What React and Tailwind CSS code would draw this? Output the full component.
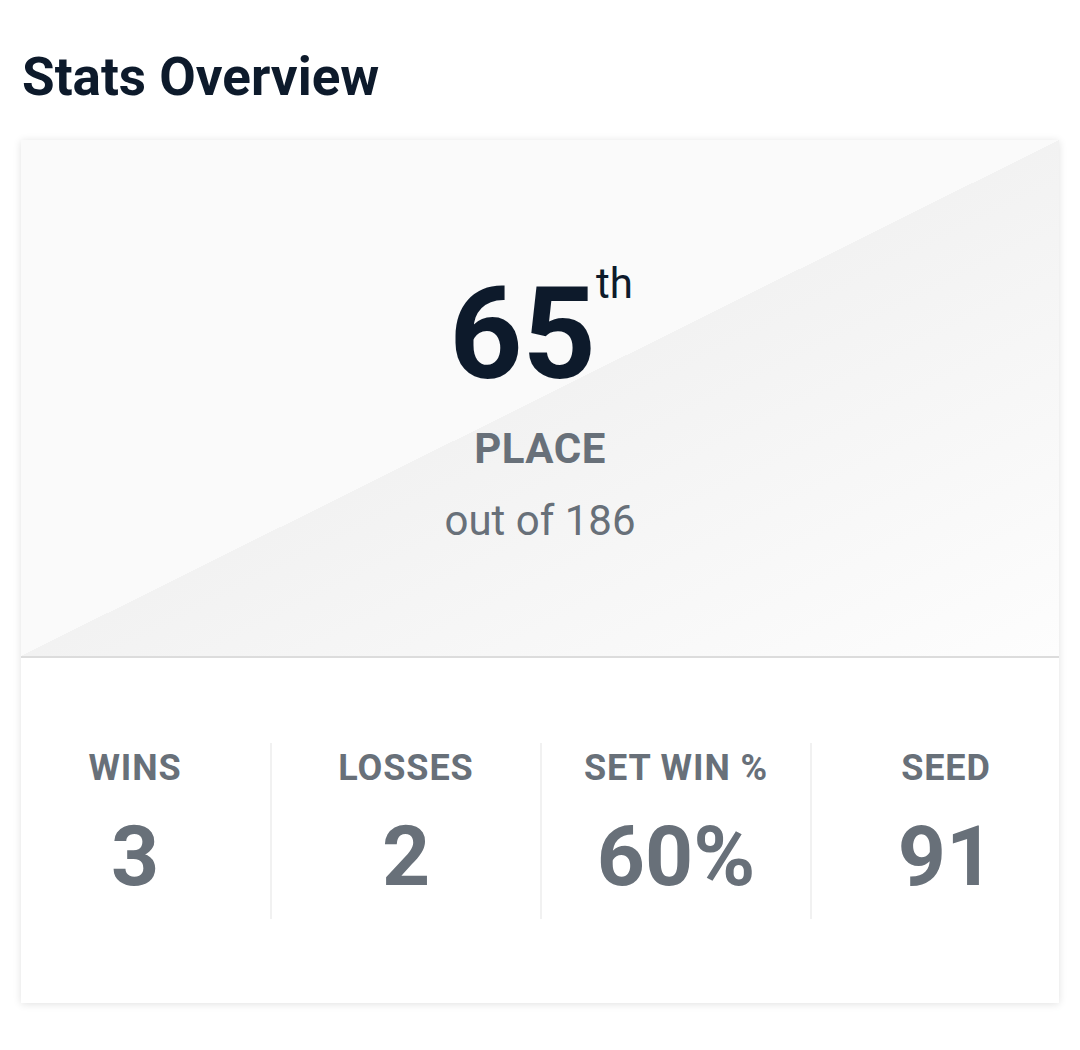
const stats = [
  { label: 'WINS', value: '3' },
  { label: 'LOSSES', value: '2' },
  { label: 'SET WIN %', value: '60%' },
  { label: 'SEED', value: '91' },
]

function StatCell({ label, value, first }) {
  return (
    <div className={`flex flex-col items-center pt-[7px] pb-[20px] ${first ? '' : 'border-l-2 border-[#f1f1f1]'}`}>
      <span className="text-[36px] leading-none font-bold tracking-wide text-[#687079]">{label}</span>
      <span className="mt-[29px] text-[84px] leading-none font-bold text-[#687079]">{value}</span>
    </div>
  )
}

export default function App() {
  return (
    <div className="w-[1080px] min-h-[1050px] bg-white font-['Roboto',sans-serif] pt-[51px]">
      <h2 className="px-[22px] text-[53px] leading-none font-bold text-[#0d1a2b]">Stats Overview</h2>

      <div className="mx-[21px] mt-[36px] bg-white shadow-[0_1px_8px_rgba(0,0,0,0.12)]">
        <div className="h-[516px] flex flex-col items-center pt-[130px] bg-[linear-gradient(to_bottom_right,#fafafa_50%,#f2f2f2_50%,#fdfdfd_100%)]">
          <div className="flex items-start pl-[2px]">
            <span className="text-[128px] leading-none font-bold text-[#0d1a2b]">65</span>
            <span className="-mt-[7px] text-[42px] leading-none text-[#0d1a2b]">th</span>
          </div>
          <span className="mt-[30px] text-[42px] leading-none font-bold tracking-[0.5px] text-[#687079]">PLACE</span>
          <span className="mt-[30px] text-[42px] leading-none text-[#687079]">out of 186</span>
        </div>

        <div className="border-t-2 border-[#dcdcdc]" />

        <div className="-mx-[21px] grid grid-cols-4 pt-[85px] pb-[84px]">
          {stats.map((s, i) => (
            <StatCell key={s.label} label={s.label} value={s.value} first={i === 0} />
          ))}
        </div>
      </div>
    </div>
  )
}
